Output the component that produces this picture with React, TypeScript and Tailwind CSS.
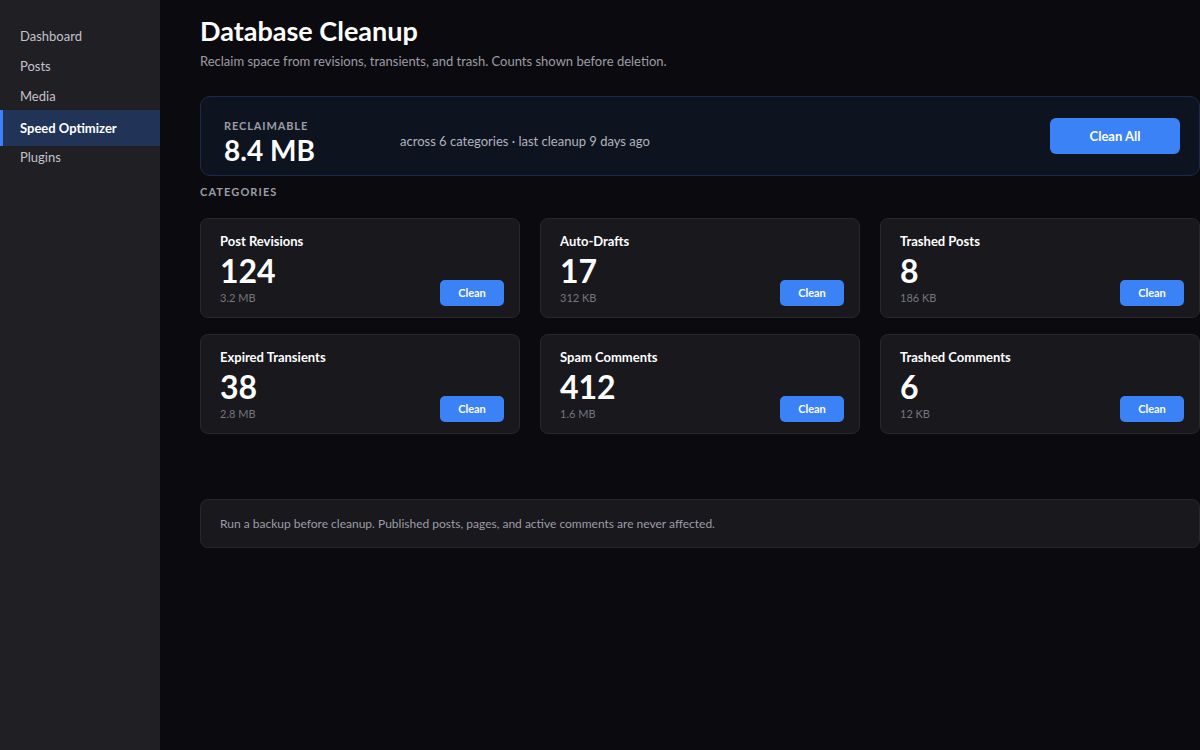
import React from "react";

const navItems = ["Dashboard", "Posts", "Media", "Speed Optimizer", "Plugins"];

const categories = [
  { name: "Post Revisions", count: "124", size: "3.2 MB" },
  { name: "Auto-Drafts", count: "17", size: "312 KB" },
  { name: "Trashed Posts", count: "8", size: "186 KB" },
  { name: "Expired Transients", count: "38", size: "2.8 MB" },
  { name: "Spam Comments", count: "412", size: "1.6 MB" },
  { name: "Trashed Comments", count: "6", size: "12 KB" },
];

function Sidebar() {
  return (
    <aside className="w-[160px] shrink-0 bg-[#1f1f24] pt-[22px]">
      <nav className="flex flex-col">
        {navItems.map((item) =>
          item === "Speed Optimizer" ? (
            <div
              key={item}
              className="mt-[-2px] mb-[-3px] flex h-[36px] items-center border-l-[3px] border-[#3b82f6] bg-[#213457] pl-[17px] pt-px text-[13px] font-bold text-white"
            >
              {item}
            </div>
          ) : (
            <div key={item} className="flex h-[30px] items-center pl-5 text-[13px] text-[#c3c3ca]">
              {item}
            </div>
          )
        )}
      </nav>
    </aside>
  );
}

function CategoryCard({ name, count, size }: { name: string; count: string; size: string }) {
  return (
    <div className="flex h-[100px] items-end justify-between rounded-lg border border-[#27272d] bg-[#18181d] pb-[11px] pl-[19px] pr-[15px] pt-[13px]">
      <div className="flex h-full flex-col">
        <div className="text-[13px] font-bold leading-[18px] text-white">{name}</div>
        <div className="mt-[3px] text-[32px] font-bold leading-[36px] text-white">{count}</div>
        <div className="mt-[2px] text-[11px] leading-[14px] text-[#76767e]">{size}</div>
      </div>
      <button className="h-[26px] w-[64px] rounded-[5px] bg-[#3b82f6] pt-px text-[11px] font-bold text-white">
        Clean
      </button>
    </div>
  );
}

export default function App() {
  return (
    <div
      className="flex h-[750px] w-[1200px] overflow-hidden bg-[#0b0b0f]"
      style={{ fontFamily: 'Lato, "Noto Sans", sans-serif' }}
    >
      <Sidebar />
      <main className="w-[1040px] shrink-0 pl-10 pt-[14px]">
        <h1 className="text-[27px] font-bold leading-[34px] text-white">Database Cleanup</h1>
        <p className="mt-[4px] text-[13px] leading-[18px] text-[#9d9da6]">
          Reclaim space from revisions, transients, and trash. Counts shown before deletion.
        </p>

        {/* summary banner */}
        <section className="mt-[26px] flex h-[80px] items-center rounded-[10px] border border-[#1c2a45] bg-[#0e1320] pl-[23px] pr-[19px]">
          <div className="w-[176px] pt-[14px]">
            <div className="text-[11px] font-bold uppercase leading-[14px] tracking-[0.08em] text-[#9d9da6]">
              Reclaimable
            </div>
            <div className="text-[28px] font-bold leading-[34px] text-white">8.4 MB</div>
          </div>
          <div className="flex-1 pt-[10px] text-[13px] leading-[18px] text-[#b4b4bc]">
            across 6 categories · last cleanup 9 days ago
          </div>
          <button className="h-[36px] w-[130px] rounded-md bg-[#3b82f6] pt-[2px] text-[13px] font-bold text-white">
            Clean All
          </button>
        </section>

        <h2 className="mt-[9px] text-[11px] font-bold uppercase leading-[14px] tracking-[0.1em] text-[#9d9da6]">
          Categories
        </h2>

        <div className="mt-[19px] grid grid-cols-3 gap-x-5 gap-y-4">
          {categories.map((c) => (
            <CategoryCard key={c.name} {...c} />
          ))}
        </div>

        <div className="mt-[65px] flex h-[49px] items-center rounded-lg border border-[#27272d] bg-[#18181d] px-[19px] text-[12px] text-[#9d9da6]">
          Run a backup before cleanup. Published posts, pages, and active comments are never affected.
        </div>
      </main>
    </div>
  );
}
